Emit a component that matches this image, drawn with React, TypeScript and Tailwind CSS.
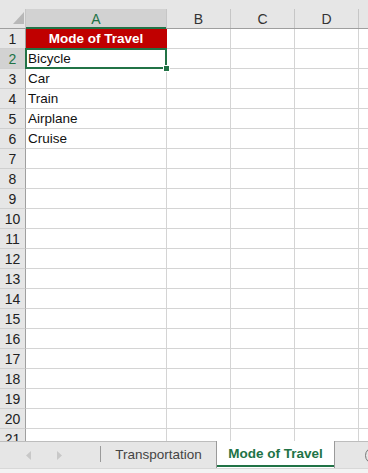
import React from "react";

const rows: (string | null)[] = [
  null,
  "Bicycle",
  "Car",
  "Train",
  "Airplane",
  "Cruise",
  ...Array(15).fill(""),
];

export default function App() {
  const font = { fontFamily: '"Liberation Sans", Arial, sans-serif' };
  return (
    <div
      className="w-[368px] h-[473px] flex flex-col overflow-hidden bg-white text-[13.5px] text-[#111]"
      style={font}
    >
      {/* header area */}
      <div className="h-[9px] shrink-0 bg-[#e6e6e6]" />
      <div className="h-[20px] flex bg-[#e6e6e6] border-b border-[#9f9f9f] shrink-0 text-[14px]">
        <div className="w-[26px] shrink-0 border-r border-[#c6c6c6] relative">
          <svg className="absolute left-[13px] top-[3px]" width="11" height="12" viewBox="0 0 11 12">
            <polygon points="11,0 11,12 0,12" fill="#b8b8b8" />
          </svg>
        </div>
        <div className="w-[141px] shrink-0 flex items-center justify-center pt-px bg-[#d2d2d2] border-r border-[#c6c6c6] text-[#217346] relative">
          A
          <div className="absolute left-0 right-0 -bottom-px h-[2px] bg-[#217346]" />
        </div>
        <div className="w-[64px] shrink-0 flex items-center justify-center pt-px border-r border-[#c6c6c6] text-[#333]">B</div>
        <div className="w-[64px] shrink-0 flex items-center justify-center pt-px border-r border-[#c6c6c6] text-[#333]">C</div>
        <div className="w-[64px] shrink-0 flex items-center justify-center pt-px border-r border-[#c6c6c6] text-[#333]">D</div>
        <div className="flex-1" />
      </div>

      {/* grid */}
      <div className="flex-1 min-h-0 overflow-hidden flex flex-col">
        {rows.map((val, i) => {
          const n = i + 1;
          const selected = n === 2;
          return (
            <div key={n} className="h-[20px] shrink-0 flex">
              <div
                className={
                  "w-[26px] shrink-0 flex items-center justify-center pt-[2px] border-r border-b text-[14px] " +
                  (selected
                    ? "bg-[#d2d2d2] text-[#217346] border-r-[#9f9f9f] border-b-[#cfcfcf]"
                    : "bg-[#e6e6e6] text-[#222] border-r-[#9f9f9f] border-b-[#cfcfcf]")
                }
              >
                {n}
              </div>
              {n === 1 ? (
                <div className="w-[141px] shrink-0 flex items-center justify-center pt-[2px] bg-[#c00000] text-white font-bold border-r border-b border-[#c00000]">
                  Mode of Travel
                </div>
              ) : (
                <div className="w-[141px] shrink-0 flex items-center pl-[2px] pt-[2px] border-r border-b border-[#d4d4d4] relative">
                  {val}
                  {selected && (
                    <>
                      <div className="absolute z-10 -left-px -top-px right-[-1px] bottom-[-1px] border-2 border-[#217346]" />
                      <div className="absolute z-20 right-[-4px] bottom-[-4px] w-[7px] h-[7px] bg-[#217346] border border-white" />
                    </>
                  )}
                </div>
              )}
              <div className="w-[64px] shrink-0 border-r border-b border-[#d4d4d4]" />
              <div className="w-[64px] shrink-0 border-r border-b border-[#d4d4d4]" />
              <div className="w-[64px] shrink-0 border-r border-b border-[#d4d4d4]" />
              <div className="flex-1 border-b border-[#d4d4d4]" />
            </div>
          );
        })}
      </div>

      {/* tab bar */}
      <div className="h-[27px] shrink-0 flex bg-[#e6e6e6] relative overflow-hidden">
        <div className="absolute left-0 right-0 top-0 h-px bg-[#bdbdbd]" />
        <div className="w-[100px] shrink-0 flex items-center relative">
          <svg className="absolute left-[26px] top-[10px]" width="6" height="9" viewBox="0 0 6 9">
            <polygon points="5,0 5,9 0,4.5" fill="#c8c8c8" />
          </svg>
          <svg className="absolute left-[56px] top-[10px]" width="6" height="9" viewBox="0 0 6 9">
            <polygon points="1,0 1,9 6,4.5" fill="#c8c8c8" />
          </svg>
        </div>
        <div className="w-px h-[16px] mt-[5px] bg-[#9a9a9a] shrink-0" />
        <div className="w-[115px] shrink-0 flex items-center justify-center text-[#444] pt-[1px]">
          Transportation
        </div>
        <div className="w-[119px] shrink-0 bg-white border-l border-r border-[#9a9a9a] flex flex-col relative z-10">
          <div className="flex-1 flex items-center justify-center font-bold text-[#217346] pt-[2px]">
            Mode of Travel
          </div>
          <div className="h-[2px] mb-[1px] bg-[#217346]" />
        </div>
        <div className="flex-1" />
        <div className="absolute right-[-14px] top-[6px] w-[17px] h-[17px] rounded-full border border-[#777]" />
      </div>
      <div className="h-[5px] shrink-0 bg-[#f3f3f3] border-t border-[#d8d8d8]" />
    </div>
  );
}
